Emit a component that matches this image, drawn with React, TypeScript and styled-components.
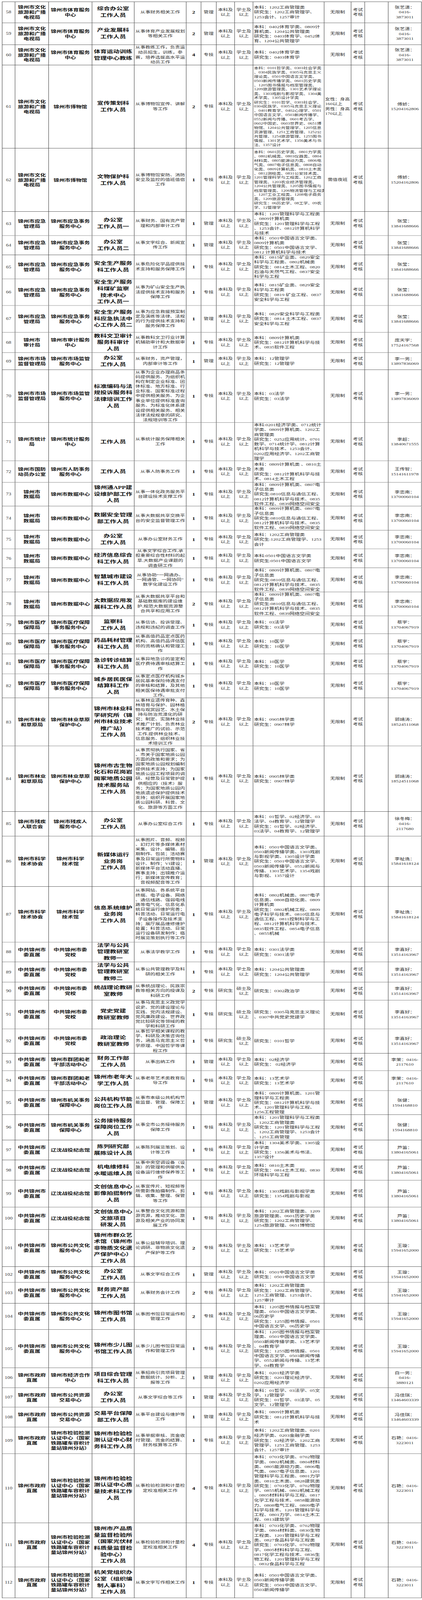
import React from 'react';
import styled, { createGlobalStyle } from 'styled-components';

const GlobalStyle = createGlobalStyle`
  html, body { margin: 0; padding: 0; background: #ffffff; }
  body {
    font-family: "Liberation Serif", "Noto Sans CJK SC", serif;
    color: #2e2e2e;
  }
`;

const LINE = '#333333';
/* the page is photographed at 1080x4096 css px and shown at 1080x5056,
   so the sheet is drawn at picture scale and compressed vertically */
const FIT = 4096 / 5056;

const Viewport = styled.div`
  height: 4096px;
  overflow: hidden;
`;

const Frame = styled.div`
  padding: 5px 0 0 5px;
  transform: scaleY(${FIT});
  transform-origin: 0 0;
`;

const Sheet = styled.div`
  width: 1073px;
  border-top: 1px solid ${LINE};
  border-left: 1px solid ${LINE};
`;

const Row = styled.div<{ $h: number }>`
  display: flex;
  height: ${(p) => `${p.$h}px`};
  overflow: hidden;
`;

const Cell = styled.div`
  box-sizing: border-box;
  flex: 0 0 auto;
  height: 100%;
  overflow: hidden;
  border-right: 1px solid ${LINE};
  border-bottom: 1px solid ${LINE};
  display: flex;
  flex-direction: column;
  justify-content: center;
  align-items: center;
  text-align: center;
  font-size: 12.7px;
  line-height: 15.2px;
`;

const Line = styled.span`
  display: block;
  flex: none;
  white-space: nowrap;
  transform: scaleY(0.88);
`;

const NoCell = styled(Cell)`
  width: 33px;
  font-size: 13.5px;
  color: #333;
`;

const DeptCell = styled(Cell)`
  width: 86px;
  font-weight: 700;
  font-size: 14.3px;
  line-height: 16px;
  color: #111;
`;

const UnitCell = styled(DeptCell)`
  width: 111px;
`;

const PostCell = styled(Cell)`
  width: 108px;
  font-weight: 700;
  font-size: 16.4px;
  line-height: 20.6px;
  color: #111;
`;

const DescCell = styled(Cell)`
  width: 133px;
  line-height: 15.1px;
`;

const CountCell = styled(Cell)`
  width: 38px;
  font-weight: 700;
  font-size: 15.5px;
  color: #111;
`;

const TypeCell = styled(Cell)`
  width: 39px;
`;

const EduCell = styled(Cell)`
  width: 47px;
`;

const MajorCell = styled(Cell)<{ $small?: boolean }>`
  width: 182px;
  align-items: flex-start;
  text-align: left;
  padding-left: 2px;
  font-size: ${(p) => (p.$small ? '11.5px' : '13px')};
  line-height: ${(p) => (p.$small ? '13.5px' : '15.2px')};
`;

const CondCell = styled(Cell)<{ $left?: boolean }>`
  width: 69px;
  align-items: ${(p) => (p.$left ? 'flex-start' : 'center')};
  padding-left: ${(p) => (p.$left ? '2px' : '0')};
`;

const MethodCell = styled(Cell)`
  width: 35px;
`;

const BlankCell = styled(Cell)`
  width: 60px;
`;

const ContactCell = styled(Cell)`
  width: 85px;
  font-size: 13px;
  line-height: 15.5px;
`;

type R = {
  n: number;
  h: number;
  d: string;
  u: string;
  p: string;
  s: string;
  c: number;
  t: string;
  m: string;
  sm?: boolean;
  e?: string;
  g?: string;
  k?: string;
  kl?: boolean;
  ct: string;
};

const D_WL = '锦州市文化|旅游和广播|电视局';
const U_TY = '锦州市体育服务|中心';
const D_YJ = '锦州市应急|管理局';
const U_YJ = '锦州市应急事务|服务中心';
const D_SC = '锦州市市场|监督管理局';
const U_SC = '锦州市市场监管|服务中心';
const D_SJ = '锦州市|数据局';
const U_SJ = '锦州市数据中心';
const D_YB = '锦州市医疗|保障局';
const U_YB = '锦州市医疗保障|事务服务中心';
const D_LY = '锦州市林业|和草原局';
const U_LY = '锦州市林业草原|保护中心';
const D_KX = '锦州市科学|技术协会';
const U_KX = '锦州市科学|技术馆';
const D_ZG = '中共锦州市|委直属';
const U_DX = '中共锦州市委|党校';
const U_QT = '锦州市群团和老|干部活动中心';
const U_JG = '锦州市机关事务|保障中心';
const U_LS = '辽沈战役纪念馆';
const U_GW = '锦州市公共文化|服务中心';
const D_ZF = '锦州市政府|直属';
const U_ZY = '锦州市公共资源|交易中心';
const U_JY = '锦州市检验检测|认证中心（国家|铁路罐车容积计|量站锦州分站）';

const M_SJ = '本科：0809计算机类、0807电|子信息类|研究生:0810信息与通信工程、|0812计算机科学与技术、0835|软件工程、0839网络空间安全';
const M_YX = '本科：10医学|研究生：10医学';
const M_LX = '本科：0905林学类|研究生：0907林学';

const C_ZYX = '张艺潇：|0416-|3873011';
const C_FJ = '傅娇：|15204162806';
const C_ZY = '张莹：|13841688666';
const C_LYN = '李一男：|13897836069';
const C_LZN = '李忠南：|13700060104';
const C_CY = '蔡宇：|13704067919';
const C_GJT = '郭靖涛：|18524511068';
const C_LZY = '李祉逸：|15841618124';
const C_LXH = '李喜好：|13514163967';
const C_LM = '李茉：0416-|2117610';
const C_ZJ = '张健：|1594168810';
const C_LD = '芦笛：|13804165061';
const C_WX = '王璇：|15941652000';
const C_FJQ = '冯佳琪：|13464603339';
const C_SY = '石艳：0416-|3223011';

const rows: R[] = [
  { n: 58, h: 67, d: D_WL, u: U_TY, p: '综合办公室|工作人员', s: '从事财务相关工作', c: 2, t: '管理', m: '本科：1202工商管理类|研究生：1202工商管理学、|1253会计、1257审计', ct: C_ZYX },
  { n: 59, h: 69, d: D_WL, u: U_TY, p: '产业发展科|工作人员', s: '从事体育产业发展规划|等相关工作', c: 2, t: '管理', m: '本科：0402体育学类、0809计|算机类、1204公共管理类|研究生：0403体育学、0452体|育、1204公共管理学', ct: C_ZYX },
  { n: 60, h: 64, d: D_WL, u: U_TY, p: '体育运动训练|管理中心教练', s: '从事教练工作，负责运|动员招生，训练，参|赛，培养选拔高水平运|动员工作', c: 4, t: '专技', m: '本科：0402体育学类|研究生：0403体育学', ct: C_ZYX },
  { n: 61, h: 263, d: D_WL, u: '锦州市博物馆', p: '宣传策划科|工作人员', s: '从事博物馆宣传、讲解|等工作', c: 2, t: '专技', sm: true,
    m: '本科：0101哲学类、0303社会学类|、0304民族学类、0305马克思主义|理论类、0501中国语言文学类、|0503新闻传播学类、0601历史学类|、1205图书情报与档案管理类、|1209旅游管理类、1301艺术学理论|类、1303戏剧与影视学类、1304美|术学类、1305设计学类|研究生：0101哲学、0303社会学、|0304民族学、0305马克思主义理论|、0401教育学、0402心理学、0501|中国语言文学、0503新闻传播学、|0552新闻与传播、0601考古学、|0602中国史、0603世界史、0651博|物馆、1204公共管理学、1205信息|资源管理、1251工商管理、1252公|共管理、1254旅游管理、1255图书|情报、1301艺术学、1356美术与书|法、1357设计',
    k: '女性：身高|160以上|男性：身高|170以上', kl: true, ct: C_FJ },
  { n: 62, h: 200, d: D_WL, u: '锦州市博物馆', p: '文物保护科|工作人员', s: '从事博物馆安防、消防|安全及监控的值班值宿|工作', c: 1, t: '专技', sm: true,
    m: '本科：0601历史学类、0801力学类|、0802机械类、0803仪器类、0804|材料类、0805能源动力类、0806电|气类、0807电子信息类、0808自动|化类、0809计算机类、0810土木类|、0812测绘类、0831公安技术类、|1201管理科学与工程类、1202工商|管理类、1203农业经济管理类、|1204公共管理类、1205图书情报与|档案管理类、1206物流管理与工程类|、1207工业工程类、1208电子商务|类、1209旅游管理类|研究生：06历史学、08工学、09农|学、12管理学',
    k: '需值夜班', ct: C_FJ },
  { n: 63, h: 76, d: D_YJ, u: U_YJ, p: '办公室|工作人员一', s: '从事财务、国有资产管|理和内部审计工作', c: 1, t: '管理', m: '本科：1201管理科学与工程类|、0809计算机类|研究生：1201管理科学与工程|、1253会计、0812计算机科学|与技术', ct: C_ZY },
  { n: 64, h: 61, d: D_YJ, u: U_YJ, p: '办公室|工作人员二', s: '从事文字综合、新闻宣|传工作', c: 1, t: '管理', m: '本科：0501中国语言文学类、|0809计算机类|研究生：0501中国语言文学、|0812 计算机科学与技术', ct: C_ZY },
  { n: 65, h: 76, d: D_YJ, u: U_YJ, p: '安全生产服务|科工作人员', s: '从事危险化学品提供技|术支持和服务保障工作', c: 1, t: '专技', m: '本科：0815矿业类、0829安全|科学与工程类、0802机械类|研究生：0814土木工程、0820|石油与天然气工程、0837安全|科学与工程', ct: C_ZY },
  { n: 66, h: 84, d: D_YJ, u: U_YJ, p: '安全生产服务|科煤矿监察|技术中心|工作人员一', s: '从事为矿山安全生产执|法提供技术支持和服务|保障工作', c: 1, t: '专技', m: '本科：0815矿业类、0829安全|科学与工程类|研究生：0819 矿业工程、0837|安全科学与工程', ct: C_ZY },
  { n: 67, h: 85, d: D_YJ, u: U_YJ, p: '安全生产服务|科应急执法中|心工作人员二', s: '从事为应急救援预案制|定及演练等法律、法规|的行为提供技术支持和|服务保障工作', c: 1, t: '管理', m: '本科：0829安全科学与工程类|研究生：0814 土木工程、0837|安全科学与工程', ct: C_ZY },
  { n: 68, h: 64, d: '锦州市|审计局', u: '锦州市审计服务|中心', p: '教科文卫审计|服务科审计|人员', s: '从事教科文卫行业计算|机辅助审计和大数据审|计工作', c: 1, t: '专技', m: '本科：0809计算机类|研究生：0812计算机科学与技|术、0835软件工程', ct: '庞天宇：|17524167568' },
  { n: 69, h: 54, d: D_SC, u: U_SC, p: '办公室|工作人员', s: '从事财务，资产管理，|内部审计等工作', c: 1, t: '管理', m: '本科：12管理学|研究生：12管理学', ct: C_LYN },
  { n: 70, h: 167, d: D_SC, u: U_SC, p: '标准编码与法|规投诉服务科|法律培训工作|人员', s: '从事为企业办理商品条|码提供服务、为组织机|构在制定企业标准、团|体标准、地方标准、行|业标准、国家标准过程|中提供相关服务、为企|事业单位提供标准查询|服务、为标准化体系建|设提供相关服务、相关|法律法规规章的研究、|法规培训等工作', c: 1, t: '专技', m: '本科：03法学|研究生：03法学', ct: C_LYN },
  { n: 71, h: 121, d: '锦州市统计|局', u: '锦州市统计服务|中心', p: '工作人员', s: '从事统计服务保障相关|工作', c: 1, t: '专技', m: '本科:0201经济学类、0712统计|学类、0809计算机类、1202工|商管理类|研究生：0252应用统计、0701|数学、0714统计学、0812计算|机科学与技术、1253会计、|0202应用经济学、1202工商管|理学', ct: '李超：|13840671555' },
  { n: 72, h: 68, d: '锦州市国防|动员办公室', u: '锦州市人防事务|服务中心', p: '工作人员', s: '从事人防事务工作', c: 1, t: '专技', m: '本科：0809计算机类 、0810土|木类|研究生：0812计算机科学与技|术、0814土木工程', ct: '王传智：|15141611978' },
  { n: 73, h: 75, d: D_SJ, u: U_SJ, p: '锦州通APP建|设维护部工作|人员', s: '从事一体化政务服务平|台建设技术支撑工作', c: 1, t: '专技', m: M_SJ, ct: C_LZN },
  { n: 74, h: 76, d: D_SJ, u: U_SJ, p: '数据安全管理|部工作人员', s: '从事大数据共享交换平|台的安全监督管理工作', c: 1, t: '专技', m: M_SJ, ct: C_LZN },
  { n: 75, h: 59, d: D_SJ, u: U_SJ, p: '办公室|工作人员', s: '从事办公室财务工作', c: 1, t: '专技', m: '本科：1202工商管理类|研究生:1202工商管理学、1253|会计', ct: C_LZN },
  { n: 76, h: 60, d: D_SJ, u: U_SJ, p: '经济信息综合|科工作人员', s: '从事文字综合工作,承|担重要综合性材料的起|草,大数据产业课题的|调查研工作', c: 1, t: '专技', m: '本科:0501中国语言文学类|研究生:0501中国语言文学', ct: C_LZN },
  { n: 77, h: 76, d: D_SJ, u: U_SJ, p: '智慧城市建设|科工作人员', s: '从事协助“一网通办、|一网通管、一网协同”|数字化建设工作', c: 1, t: '专技', m: M_SJ, ct: C_LZN },
  { n: 78, h: 76, d: D_SJ, u: U_SJ, p: '大数据应用发|展科工作人员', s: '从事大数据共享平台和|基础数据库的建设维|护,规范大数据资源整|合共享和应用工作', c: 2, t: '专技', m: M_SJ, ct: C_LZN },
  { n: 79, h: 56, d: D_YB, u: U_YB, p: '监察科|工作人员', s: '从事信访、投诉受理、|违规和违纪的调查工作', c: 1, t: '专技', m: '本科：03法学|研究生：03法学', ct: C_CY },
  { n: 80, h: 64, d: D_YB, u: U_YB, p: '药品耗材管理|科工作人员', s: '从事高值药品定点医药|机构、高值药品评估医|师的资格确认和管理工|作', c: 1, t: '专技', m: M_YX, ct: C_CY },
  { n: 81, h: 63, d: D_YB, u: U_YB, p: '急诊转诊结算|科工作人员', s: '从事异地急诊的鉴定和|医疗费待遇审核结算工|作', c: 1, t: '专技', m: M_YX, ct: C_CY },
  { n: 82, h: 76, d: D_YB, u: U_YB, p: '城乡居民医保|结算科工作|人员', s: '从事定点医疗机构城乡|居民基本保险待遇支付|的审核和结算，及其他|相关医保待遇审批支付|工作。', c: 1, t: '专技', m: M_YX, ct: C_CY },
  { n: 83, h: 152, d: D_LY, u: U_LY, p: '锦州市林业科|学研究所（锦|州市林业技术|推广站）|工作人员', s: '从事林业遗传育种、森|林培育与保护、园林植|物与观赏园艺、水土保|持与防治荒漠化的研|究；制定、实施林业技|术推广计划、负责林业|技术推广的试验、示范|工作,提供林业技术、|信息服务、组织林业技|术培训工作', c: 2, t: '专技', m: M_LX, ct: C_GJT },
  { n: 84, h: 207, d: D_LY, u: U_LY, p: '锦州市古生物|化石和花岗岩|国家地质公园|技术服务站|工作人员', s: '从事贯彻执行国家、省|、市关于国家地质公园|方面的政策和要求；为|国家地质公园规划编制|提供技术支持；为国家|地质公园工程项目的调|研、经营及日常管护提|供相应的（技术）服|务；为国家地质公园内|地质遗迹保护提供技术|支持；组织开展国家地|质公园科研、科普、文|化、旅游等方面工作', c: 1, t: '专技', m: M_LX, ct: C_GJT },
  { n: 85, h: 78, d: '锦州市残疾|人联合会', u: '锦州市残疾人|服务中心', p: '办公室|工作人员', s: '从事办公室综合工作', c: 1, t: '专技', m: '本科：01哲学、02经济学、03|法学、04教育学、12管理学|研究生：01哲学、02经济学、|03法学、04教育学、12管理学', ct: '徐冬梅：|0416-|2117680' },
  { n: 86, h: 159, d: D_KX, u: U_KX, p: '新媒体运行|业务岗|工作人员', s: '从事图片、音频、视频|、幻灯片等多媒体素材|采集、设计、编辑、后|期制作、包装；活动赛|事及日常运行所需物料|设计、制作；VI建设；|新媒体平台活动直播、|赛事主持；出镜推介运|行；新媒体宣传教育；|音视频配音等工作', c: 1, t: '管理', m: '本科：0501中国语言文学类、|0503新闻传播学类、1303戏剧|与影视学类、1305设计学类|研究生：0501中国语言文学、|0503新闻传播学、0552新闻与|传播、1301艺术学、1354戏剧|与影视、1357设计', ct: C_LZY },
  { n: 87, h: 176, d: D_KX, u: U_KX, p: '信息系统维护|业务岗|工作人员', s: '从事网站、各系统平台|终端、电子设备、网络|、通信线路、强弱电线|路等电气化、信息化系|统日常运行维护完善；|科普活动、日常运行电|子设备操作及技术支|持；展厅展品维修维护|处置；科普活动、日常|运行设备研发制作；临|时展览策划执行等工作', c: 1, t: '专技', m: '本科：0802机械类、0807电子|信息类、0808自动化类、0809|计算机类|研究生：0802机械工程、0809|电子科学与技术、0810信息与|通信工程、0811控制科学与工|程、0812计算机科学与技术、|0835软件工程、0854电子信息|、0855机械', ct: C_LZY },
  { n: 88, h: 62, d: D_ZG, u: U_DX, p: '法学与公共|管理教研室|教师一', s: '从事法学教学工作', c: 1, t: '专技', m: '本科：0301法学类|研究生：0301法学', ct: C_LXH },
  { n: 89, h: 64, d: D_ZG, u: U_DX, p: '法学与公共|管理教研室|教师二', s: '从事公共管理教学及科|研的相关工作', c: 1, t: '专技', m: '本科：1204公共管理类|研究生：1204公共管理学', ct: C_LXH },
  { n: 90, h: 57, d: D_ZG, u: U_DX, p: '统战理论教研|室教师', s: '从事统战理论、民族宗|教等相关方向的授课及|科研工作', c: 2, t: '专技', e: '研究生', g: '硕士及|以上', m: '研究生：0302政治学', ct: C_LXH },
  { n: 91, h: 91, d: D_ZG, u: U_DX, p: '党史党建|教研室教师', s: '从事马克思主义政党学|说史、党的建设理论与|实践、党内法规建设、|党风廉政建设、世界政|党比较研究等领域的教|学和科研工作', c: 1, t: '专技', e: '研究生', g: '硕士及|以上', m: '研究生：0305马克思主义理论|、0307中共党史党建学', ct: C_LXH },
  { n: 92, h: 77, d: D_ZG, u: U_DX, p: '政治理论|教研室教师', s: '从事哲学相关课程的教|学、科研及决策咨询任|务，涵盖马克思主义哲|学原理、中国哲学等课|程工作', c: 1, t: '专技', e: '研究生', g: '硕士及|以上', m: '研究生：0101哲学', ct: C_LXH },
  { n: 93, h: 55, d: D_ZG, u: U_QT, p: '财务工作部|工作人员', s: '从事出纳工作', c: 1, t: '管理', m: '本科：02经济学|研究生： 02经济学', ct: C_LM },
  { n: 94, h: 63, d: D_ZG, u: U_QT, p: '锦州市老年大|学工作人员', s: '从事老年艺术类教育指|导工作', c: 1, t: '专技', m: '本科：13艺术学|研究生：13艺术学', ct: C_LM },
  { n: 95, h: 76, d: D_ZG, u: U_JG, p: '公共机构节能|岗位工作人员', s: '从事市本级公共机构节|能监督、管理、保障工|作', c: 1, t: '管理', m: '本科：0809计算机类、1201管|理科学与工程类|研究生：0812计算机科学与技|术、1201管理科学与工程、|1256工程管理', ct: C_ZJ },
  { n: 96, h: 80, d: D_ZG, u: U_JG, p: '公务接待服务|保障岗位工作|人员', s: '从事全市公务接待服务|保障工作', c: 1, t: '专技', m: '本科：1201管理科学与工程类|、1202工商管理类|研究生：1201管理科学与工程|、1202工商管理学、1253会计|、1251工商管理', ct: C_ZJ },
  { n: 97, h: 63, d: D_ZG, u: U_LS, p: '陈列研究部|展陈设计人员', s: '从事陈列展览策划、设|计等工作', c: 1, t: '专技', m: '本科：1304美术学类、1305设|计学类|研究生：1356美术与书法、|1357设计', ct: C_LD },
  { n: 98, h: 64, d: D_ZG, u: U_LS, p: '机电维修科|水暖运维人员', s: '从事中央空调设备（设|施）的管理和供暖供水|设备运行维修保养等工|作', c: 1, t: '专技', m: '本科：0810土木类|研究生：0814土木工程、0830|环境科学与工程', ct: C_LD },
  { n: 99, h: 85, d: D_ZG, u: U_LS, p: '文创信息中心|影像拍摄制作|人员', s: '从事宣传片、短视频等|所需影像拍摄制作、剪|辑、收集、整理、保管|等工作', c: 1, t: '专技', m: '本科：1303戏剧与影视学类|研究生：1354戏剧与影视', ct: C_LD },
  { n: 100, h: 71, d: D_ZG, u: U_LS, p: '文创信息中心|文旅项目|研发人员', s: '从事整合文化资源和旅|游资源，推动文化、旅|游及相关产业的协同发|展工作', c: 1, t: '专技', m: '本科：1202工商管理类、1209|旅游管理类、0601历史学类|研究生：1202工商管理学、|1254旅游管理、0651博物馆', ct: C_LD },
  { n: 101, h: 117, d: D_ZG, u: U_GW, p: '锦州市群众艺|术馆（锦州市|非物质文化遗|产保护中心）|工作人员', s: '从事公益辅导培训、理|论调研、非物质文化遗|产保护等工作', c: 2, t: '专技', m: '本科：13艺术学|研究生：13艺术学', ct: C_WX },
  { n: 102, h: 50, d: D_ZG, u: U_GW, p: '办公室|工作人员', s: '从事文字综合工作', c: 1, t: '管理', m: '本科：0501中国语言文学类|研究生：0501中国语言文学', ct: C_WX },
  { n: 103, h: 66, d: D_ZG, u: U_GW, p: '财务资产部|工作人员', s: '从事财务会计工作', c: 2, t: '专技', m: '本科：1202工商管理类|研究生：1202工商管理学、|1251工商管理、1253会计、|1257审计', ct: C_WX },
  { n: 104, h: 83, d: D_ZG, u: U_GW, p: '锦州市图书馆|工作人员', s: '从事图书馆日常运作和|管理工作', c: 2, t: '专技', m: '本科：1205图书情报与档案管|理类、0501中国语言文学类、|06历史学|研究生：1255图书情报、0501|中国语言文学、06历史学', ct: C_WX },
  { n: 105, h: 121, d: D_ZG, u: U_GW, p: '锦州市少儿图|书馆工作人员', s: '从事少儿图书馆日常运|作和管理工作', c: 1, t: '专技', m: '本科：1205图书情报与档案管|理类、0501中国语言文学类、|0503新闻传播学类、13艺术学|、04教育学|研究生：1255图书情报、0501|中国语言文学、0503新闻传播|学、0552新闻与传播、13艺术|学、04教育学', ct: C_WX },
  { n: 106, h: 63, d: D_ZF, u: '锦州市经济合作|中心', p: '项目综合管理|科工作人员', s: '从事招商引资项目管理|、数据统计、分析、上|报等工作', c: 1, t: '管理', m: '本科：0201经济学类|研究生：0201理论经济学、|0202应用经济学', ct: '白一男：|0416-|3880121' },
  { n: 107, h: 61, d: D_ZF, u: U_ZY, p: '办公室|工作人员', s: '从事文字综合等工作', c: 1, t: '管理', m: '本科：01哲学、03法学、05文|学、12管理学|研究生：01哲学、03法学、05|文学、12管理学', ct: C_FJQ },
  { n: 108, h: 63, d: D_ZF, u: U_ZY, p: '交易平台保障|部工作人员', s: '从事平台建设与维护等|工作', c: 1, t: '管理', m: '本科：0809计算机类|研究生：0812计算机科学与技|术', ct: C_FJQ },
  { n: 109, h: 84, d: D_ZF, u: U_JY, p: '锦州市检验检|测认证中心财|务科工作人员', s: '从事单据审核、资金收|付管理、资金的结算、|财务核算等工作', c: 1, t: '专技', m: '本科：1202工商管理类、0201|经济学类、0203金融学类|研究生：02经济学、1202工商|管理学、1251工商管理、1253|会计、1257审计', ct: C_SY },
  { n: 110, h: 219, d: D_ZF, u: U_JY, p: '锦州市检验检|测认证中心质|量技术科工作|人员', s: '从事检验检测和计量检|定校准相关工作', c: 4, t: '专技', m: '本科：0703化学类、0702物理|学类、0802机械类、0804材料|类、0805能源动力类、0806电|气类、0807电子信息类、1201|管理科学与工程类、0801力学|类、0810土木类、0828建筑类|研究生：0703化学、0702物理|学、0855机械、0802机械工程|、0805材料科学与工程、0817|化学工程与技术、0858能源动|力、0808电气工程、0809电子|科学与技术、1201管理科学与|工程、0801力学、0814土木工|程、0813建筑学', ct: C_SY },
  { n: 111, h: 139, d: D_ZF, u: U_JY, p: '锦州市产品质|量监督检验所|（国家光伏材|料质量监督检|验中心）|工作人员', s: '从事检验检测和计量检|定校准相关工作', c: 4, t: '专技', m: '本科：0703化学类、0702物理|学类、0804材料类、0830生物|工程类、1201管理科学与工程|类、0827食品科学与工程类|研究生：0703化学、0702物理|学、0805材料科学与工程、|0817化学工程与技术、0836生|物工程、1201管理科学与工程|、0832食品科学与工程', ct: C_SY },
  { n: 112, h: 98, d: D_ZF, u: U_JY, p: '机关党组织办|公室（组织编|制人事科）|工作人员', s: '从事文字写作相关工作', c: 1, t: '专技', m: '本科：0501中国语言文学类、|0503新闻传播学类|研究生：0501中国语言文学、|0503新闻传播学', ct: C_SY },
];

const Lines: React.FC<{ text: string }> = ({ text }) => (
  <>
    {text.split('|').map((l, i) => (
      <Line key={i}>{l}</Line>
    ))}
  </>
);

export default function App() {
  return (
    <>
      <GlobalStyle />
      <Viewport>
        <Frame>
          <Sheet>
            {rows.map((r) => (
              <Row key={r.n} $h={r.h}>
                <NoCell><Line>{r.n}</Line></NoCell>
                <DeptCell><Lines text={r.d} /></DeptCell>
                <UnitCell><Lines text={r.u} /></UnitCell>
                <PostCell><Lines text={r.p} /></PostCell>
                <DescCell><Lines text={r.s} /></DescCell>
                <CountCell><Line>{r.c}</Line></CountCell>
                <TypeCell><Line>{r.t}</Line></TypeCell>
                <EduCell><Lines text={r.e ?? '本科及|以上'} /></EduCell>
                <EduCell><Lines text={r.g ?? '学士及|以上'} /></EduCell>
                <MajorCell $small={r.sm}><Lines text={r.m} /></MajorCell>
                <CondCell $left={r.kl}><Lines text={r.k ?? '无限制'} /></CondCell>
                <MethodCell><Lines text="考试|考核" /></MethodCell>
                <BlankCell />
                <ContactCell><Lines text={r.ct} /></ContactCell>
              </Row>
            ))}
          </Sheet>
        </Frame>
      </Viewport>
    </>
  );
}
